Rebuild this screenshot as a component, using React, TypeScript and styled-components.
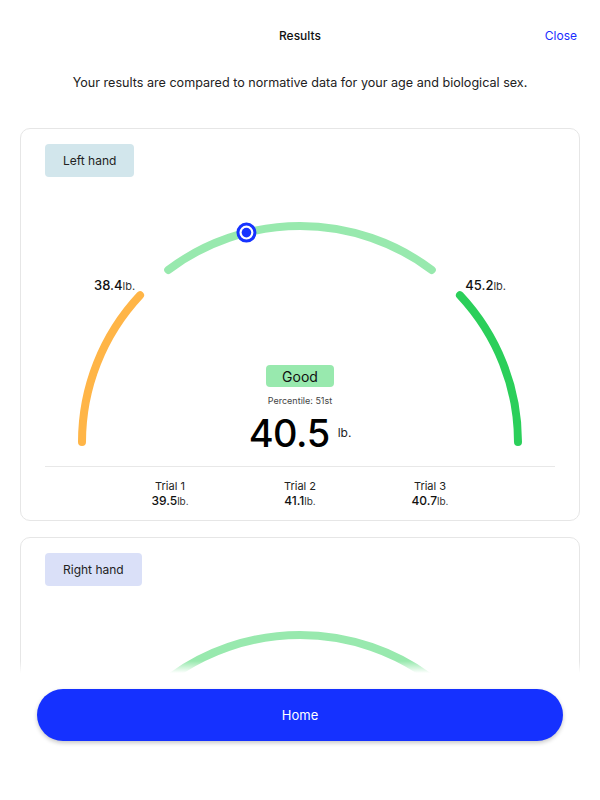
import React from "react";
import styled, { createGlobalStyle } from "styled-components";

const GlobalStyle = createGlobalStyle`
  html, body {
    margin: 0;
    padding: 0;
    height: 100%;
    overflow: hidden;
    background: #ffffff;
  }
  body {
    font-family: Inter, "Noto Sans", "Liberation Sans", sans-serif;
    color: #111111;
    -webkit-font-smoothing: antialiased;
  }
  * { box-sizing: border-box; }
`;

const Page = styled.div`
  width: 600px;
  height: 800px;
  display: flex;
  flex-direction: column;
  overflow: hidden;
  background: #ffffff;
`;

const ScrollArea = styled.div`
  flex: 1 1 auto;
  min-height: 0;
  overflow: hidden;
`;

const Header = styled.header`
  height: 70px;
  display: grid;
  grid-template-columns: 1fr auto 1fr;
  align-items: center;
  padding: 0 23px;
`;

const Title = styled.h1`
  grid-column: 2;
  margin: 0;
  font-size: 12px;
  font-weight: 500;
  color: #111111;
`;

const CloseButton = styled.button`
  grid-column: 3;
  justify-self: end;
  border: none;
  background: none;
  padding: 0;
  font-family: inherit;
  font-size: 12px;
  color: #1a2dff;
  cursor: pointer;
`;

const Subtitle = styled.p`
  margin: 0 0 32px;
  line-height: 26px;
  font-size: 12.6px;
  text-align: center;
  color: #222222;
`;

const Content = styled.main`
  display: flex;
  flex-direction: column;
  gap: 16px;
  padding: 0 20px;
`;

const Card = styled.section`
  display: flex;
  flex-direction: column;
  border: 1px solid #e6e6e6;
  border-radius: 10px;
  padding: 15px 24px 0;
  background: #ffffff;
`;

const Chip = styled.div<{ $bg: string }>`
  align-self: flex-start;
  display: flex;
  align-items: center;
  height: 33px;
  padding: 0 18px;
  border-radius: 4px;
  background: ${(p) => p.$bg};
  font-size: 12px;
  color: #222222;
`;

const Gauge = styled.div`
  position: relative;
  height: 289px;
  display: flex;
  flex-direction: column;
  align-items: center;
  justify-content: flex-end;
  padding-bottom: 14px;
`;

const GaugeArt = styled.svg`
  position: absolute;
  top: 0;
  left: 0;
  overflow: visible;
`;

const RangeLabel = styled.div<{ $side: "left" | "right" }>`
  position: absolute;
  top: 100px;
  ${(p) => (p.$side === "left" ? "left: 49px;" : "right: 49px;")}
  font-size: 13px;
  line-height: 16px;
  white-space: nowrap;
`;

const Num = styled.span<{ $size: number }>`
  font-size: ${(p) => p.$size}px;
  font-weight: 500;
  color: #111111;
`;

const Unit = styled.span<{ $size: number }>`
  font-size: ${(p) => p.$size}px;
  font-weight: 400;
  color: #333333;
`;

const Rating = styled.div`
  position: relative;
  display: flex;
  align-items: center;
  height: 22px;
  padding: 0 16px;
  border-radius: 4px;
  background: #98e9ae;
  font-size: 14px;
  color: #111111;
  margin-bottom: 7px;
`;

const Percentile = styled.div`
  position: relative;
  font-size: 9px;
  line-height: 14px;
  color: #444444;
  margin-bottom: 6px;
`;

const BigRow = styled.div`
  position: relative;
  height: 38px;
  font-size: 38px;
  line-height: 38px;
  white-space: nowrap;
`;

const BigNumber = styled.span`
  font-weight: 500;
  color: #000000;
  letter-spacing: -0.5px;
`;

const BigUnit = styled.span`
  font-size: 12px;
  line-height: 12px;
  color: #222222;
  margin-left: 8px;
  vertical-align: 10px;
`;

const Trials = styled.div`
  border-top: 1px solid #e8e8e8;
  display: grid;
  grid-template-columns: repeat(3, 130px);
  justify-content: center;
  padding: 12px 0 11px;
`;

const Trial = styled.div`
  display: flex;
  flex-direction: column;
  align-items: center;
`;

const TrialLabel = styled.div`
  font-size: 11px;
  line-height: 14px;
  color: #222222;
`;

const TrialValue = styled.div`
  font-size: 12px;
  line-height: 16px;
  white-space: nowrap;
`;

const Footer = styled.footer`
  position: relative;
  flex: 0 0 127px;
  padding: 16px 37px 0;
  background: #ffffff;
  &::before {
    content: "";
    position: absolute;
    left: 0;
    right: 0;
    top: -12px;
    height: 12px;
    background: linear-gradient(to bottom, rgba(255, 255, 255, 0), #ffffff);
  }
`;

const HomeButton = styled.button`
  width: 100%;
  height: 52px;
  border: none;
  border-radius: 26px;
  background: #1531ff;
  color: #ffffff;
  font-family: inherit;
  font-size: 13px;
  box-shadow: 0 2px 4px rgba(0, 0, 0, 0.22);
  cursor: pointer;
`;

// Gauge geometry (gauge-local coordinates)
const CX = 255;
const CY = 265;
const RX = 218;
const RY = 216;
const ORANGE: [number, number] = [0, 42.8];
const NORMAL: [number, number] = [52.8, 127.2];
const HIGH: [number, number] = [137.2, 180];

const pt = (t: number) => {
  const r = (t * Math.PI) / 180;
  return { x: CX - RX * Math.cos(r), y: CY - RY * Math.sin(r) };
};

const arcPath = ([a, b]: [number, number]) => {
  const p1 = pt(a);
  const p2 = pt(b);
  return `M ${p1.x.toFixed(2)} ${p1.y.toFixed(2)} A ${RX} ${RY} 0 0 1 ${p2.x.toFixed(2)} ${p2.y.toFixed(2)}`;
};

const markerAngle = (v: number, min: number, max: number) => {
  const span = max - min;
  if (v < min) {
    const f = Math.max(0, 1 - (min - v) / span);
    return ORANGE[0] + f * (ORANGE[1] - ORANGE[0]);
  }
  if (v > max) {
    const f = Math.min(1, (v - max) / span);
    return HIGH[0] + f * (HIGH[1] - HIGH[0]);
  }
  return NORMAL[0] + ((v - min) / span) * (NORMAL[1] - NORMAL[0]);
};

type HandData = {
  hand: string;
  chip: string;
  min: number;
  max: number;
  value: number;
  rating: string;
  percentile: string;
  trials: number[];
};

const hands: HandData[] = [
  {
    hand: "Left hand",
    chip: "#d2e6ec",
    min: 38.4,
    max: 45.2,
    value: 40.5,
    rating: "Good",
    percentile: "51st",
    trials: [39.5, 41.1, 40.7],
  },
  {
    hand: "Right hand",
    chip: "#dae0f8",
    min: 40.1,
    max: 47.3,
    value: 48.6,
    rating: "Excellent",
    percentile: "88th",
    trials: [47.9, 48.6, 48.2],
  },
];

const GaugeDrawing: React.FC<{ t: number }> = ({ t }) => {
  const m = pt(t);
  return (
    <GaugeArt width={510} height={289} viewBox="0 0 510 289" aria-hidden="true">
      <path d={arcPath(ORANGE)} fill="none" stroke="#ffb547" strokeWidth={8} strokeLinecap="round" />
      <path d={arcPath(NORMAL)} fill="none" stroke="#98e9ae" strokeWidth={8} strokeLinecap="round" />
      <path d={arcPath(HIGH)} fill="none" stroke="#2bcf5a" strokeWidth={8} strokeLinecap="round" />
      <circle cx={m.x} cy={m.y} r={8.5} fill="#ffffff" stroke="#1633ff" strokeWidth={3} />
      <circle cx={m.x} cy={m.y} r={4.8} fill="#1633ff" />
    </GaugeArt>
  );
};

const HandCard: React.FC<{ d: HandData }> = ({ d }) => (
  <Card>
    <Chip $bg={d.chip}>{d.hand}</Chip>
    <Gauge>
      <GaugeDrawing t={markerAngle(d.value, d.min, d.max)} />
      <RangeLabel $side="left">
        <Num $size={13}>{d.min.toFixed(1)}</Num>
        <Unit $size={11}>lb.</Unit>
      </RangeLabel>
      <RangeLabel $side="right">
        <Num $size={13}>{d.max.toFixed(1)}</Num>
        <Unit $size={11}>lb.</Unit>
      </RangeLabel>
      <Rating>{d.rating}</Rating>
      <Percentile>Percentile: {d.percentile}</Percentile>
      <BigRow>
        <BigNumber>{d.value.toFixed(1)}</BigNumber>
        <BigUnit>lb.</BigUnit>
      </BigRow>
    </Gauge>
    <Trials>
      {d.trials.map((v, i) => (
        <Trial key={i}>
          <TrialLabel>Trial {i + 1}</TrialLabel>
          <TrialValue>
            <Num $size={12}>{v.toFixed(1)}</Num>
            <Unit $size={10}>lb.</Unit>
          </TrialValue>
        </Trial>
      ))}
    </Trials>
  </Card>
);

export default function App() {
  return (
    <>
      <GlobalStyle />
      <Page>
        <ScrollArea>
          <Header>
            <Title>Results</Title>
            <CloseButton>Close</CloseButton>
          </Header>
          <Subtitle>Your results are compared to normative data for your age and biological sex.</Subtitle>
          <Content>
            {hands.map((h) => (
              <HandCard key={h.hand} d={h} />
            ))}
          </Content>
        </ScrollArea>
        <Footer>
          <HomeButton>Home</HomeButton>
        </Footer>
      </Page>
    </>
  );
}
